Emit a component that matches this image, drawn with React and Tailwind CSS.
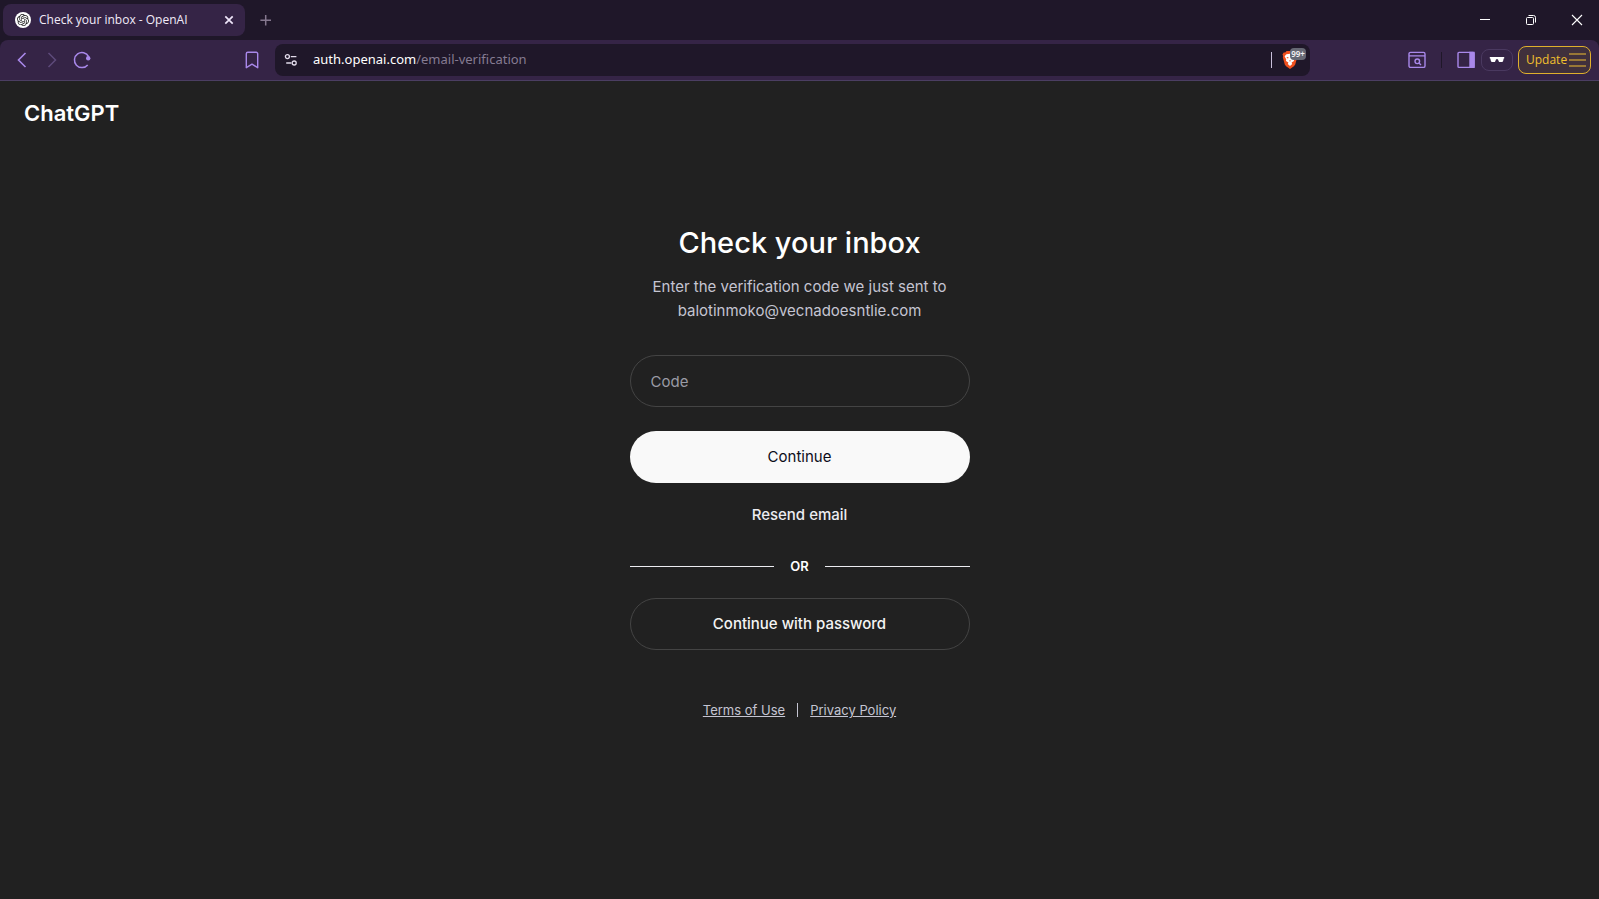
import React, { useState } from "react";
import { SiOpenai } from "react-icons/si";

const TabStrip = () => (
  <header className="h-10 w-full bg-[#1f1729] flex items-center pl-[3px] text-white">
    {/* Active tab */}
    <div className="w-[242px] h-8 rounded-lg bg-[#352446] flex items-center pl-3 pr-2">
      <span className="w-4 h-4 rounded-full bg-white flex items-center justify-center shrink-0">
        <SiOpenai className="w-3 h-3 text-[#222]" />
      </span>
      <span className="ml-2 flex-1 font-['Open_Sans',sans-serif] text-xs whitespace-nowrap text-[#f1ebf8]">
        Check your inbox - OpenAI
      </span>
      <button aria-label="Close tab" className="w-4 h-4 flex items-center justify-center">
        <svg viewBox="0 0 16 16" className="w-4 h-4" fill="none" stroke="#efe6fa" strokeWidth="1.7">
          <path d="M4.3 4.3l7.4 7.4M11.7 4.3l-7.4 7.4" />
        </svg>
      </button>
    </div>
    <button aria-label="New tab" className="ml-3 w-4 h-4">
      <svg viewBox="0 0 16 16" className="w-4 h-4" fill="none" stroke="#85788f" strokeWidth="1.5">
        <path d="M8.700 3v10.600M3.400 8.300h10.600" />
      </svg>
    </button>

    {/* Window controls */}
    <div className="ml-auto flex items-center">
      <button aria-label="Minimize" className="w-[46px] h-10 flex items-center justify-center">
        <svg viewBox="0 0 12 12" className="w-3 h-3" fill="none" stroke="#fff">
          <path d="M1 5.5h10" />
        </svg>
      </button>
      <button aria-label="Restore" className="w-[46px] h-10 flex items-center justify-center">
        <svg viewBox="0 0 12 12" className="w-3 h-3" fill="none" stroke="#fff">
          <rect x="1.5" y="3.5" width="7" height="7" rx="1" />
          <path d="M3.5 1.5h5a2 2 0 0 1 2 2v5" />
        </svg>
      </button>
      <button aria-label="Close" className="w-[45px] h-10 flex items-center justify-center">
        <svg viewBox="0 0 12 12" className="w-3 h-3" fill="none" stroke="#fff" strokeWidth="1.1">
          <path d="M1 1l10 10M11 1L1 11" />
        </svg>
      </button>
    </div>
  </header>
);

const ShieldBadge = () => (
  <button aria-label="Brave Shields" className="relative w-4 h-5">
    <svg viewBox="0 0 16 20" className="w-4 h-5">
      <path d="M4.6 1h6.8l1.4 1.6 1.5-.2 1.2 2.1-.6 1.4.3 1.3-2 7.2-1.3 1.8L8 19l-3.900-2.800-1.300-1.800-2-7.200.3-1.300-.6-1.400 1.200-2.100 1.500.2z" fill="#f0501e" />
      <path d="M4.400 4.200L8 3.700l3.600.5 1.800 2-1.600 3 .2 1.700-2.400 1.500.6 1.700L8 16l-2.200-1.900.6-1.700L4 10.900l.2-1.700-1.600-3z" fill="#fff" />
      <path d="M4.300 6.900l2.300.4-.6 1.500zM11.700 6.900l-2.300.4.6 1.500zM7.200 10.200h1.600L8 12z" fill="#f0501e" />
    </svg>
    <span className="absolute left-2 -top-0.5 w-4 h-3 rounded bg-[#666874] text-[#f3f3f5] text-[8px] leading-3 font-semibold text-center">
      99+
    </span>
  </button>
);

const Toolbar = () => (
  <div className="bg-[#1f1729]">
    <nav className="h-[41px] w-full bg-[#352446] border-b border-[#4b3e62] rounded-t-lg flex items-center pl-3.5 pr-2">
      <button aria-label="Back" className="w-4 h-5">
        <svg viewBox="0 0 16 20" className="w-4 h-5" fill="none" stroke="#a988ea" strokeWidth="1.6">
          <path d="M11.5 3L4.5 10l7 7" />
        </svg>
      </button>
      <button aria-label="Forward" className="ml-3.5 w-4 h-5">
        <svg viewBox="0 0 16 20" className="w-4 h-5" fill="none" stroke="#5e4a7a" strokeWidth="1.5">
          <path d="M4.5 3l7 7-7 7" />
        </svg>
      </button>
      <button aria-label="Reload" className="ml-3 w-5 h-5">
        <svg viewBox="0 0 20 20" className="w-5 h-5" fill="none" stroke="#a988ea" strokeWidth="1.5">
          <path d="M15.7 14.9A7.500 7.500 0 1 1 16.6 6.600" />
          <circle cx="16.2" cy="8.2" r="2.2" fill="#a988ea" stroke="none" />
        </svg>
      </button>
      <button aria-label="Bookmark this page" className="ml-[150px] w-5 h-5">
        <svg viewBox="0 0 20 20" className="w-5 h-5" fill="none" stroke="#a988ea" strokeWidth="1.4" strokeLinejoin="round">
          <path d="M4.3 3.7a1.5 1.5 0 0 1 1.5-1.5h8.4a1.5 1.5 0 0 1 1.5 1.5v14L10 14.2l-5.7 3.5z" />
        </svg>
      </button>

      {/* Address bar */}
      <div className="ml-[13px] mr-[98px] flex-1 h-8 rounded-lg bg-[#1f1729] flex items-center pl-2 pr-3">
        <svg viewBox="0 0 16 16" className="w-4 h-4 shrink-0" fill="none" stroke="#e2dbea" strokeWidth="1.3">
          <circle cx="4.4" cy="4.6" r="2" />
          <path d="M7.8 4.6h5.6M3.2 11h5.2" />
          <circle cx="11.2" cy="11" r="2" />
        </svg>
        <a href="#address" className="ml-3.5 flex-1 text-[13px] text-[#857b92] whitespace-nowrap">
          <span className="text-white">auth.openai.com</span>/email-verification
        </a>
        <span className="w-px h-4 mr-2.5 bg-[#c9bfdb]" />
        <ShieldBadge />
      </div>

      <button aria-label="Search tabs" className="w-[18px] h-[18px]">
        <svg viewBox="0 0 18 18" className="w-[18px] h-[18px]" fill="none" stroke="#a988ea" strokeWidth="1.4">
          <rect x="1" y="1.4" width="16" height="15" rx="1.5" />
          <path d="M1 4.900h16M11 12l2 2" />
          <circle cx="9.300" cy="10.300" r="2.300" />
        </svg>
      </button>
      <span className="w-px h-4 mx-[15px] bg-[#1f1729]" />
      <button aria-label="Sidebar" className="w-[18px] h-[18px]">
        <svg viewBox="0 0 18 18" className="w-[18px] h-[18px]" fill="none" stroke="#a988ea" strokeWidth="1.4">
          <rect x="1" y="1.4" width="16" height="15" rx="1" />
          <path d="M13 1.400h4v15h-4z" fill="#a988ea" />
        </svg>
      </button>
      <button aria-label="Private profile" className="ml-1.5 w-8 h-[22px] rounded-lg border border-[#4a3960] flex items-center justify-center">
        <svg viewBox="0 0 16 8" className="w-4 h-2" fill="#fff">
          <path d="M.8 1h14.400v1.500h-.5l-.6 2.600q-.2 1-1.200 1h-2q-.9 0-1.200-.9L8.900 3.200H7.100L6.300 5.200q-.3.9-1.200.9h-2q-1 0-1.200-1L1.300 2.500H.8z" />
        </svg>
      </button>
      <button className="ml-[5px] w-[73px] h-7 rounded-lg border border-[#e0b02c] bg-[#40303c] flex items-center justify-between pl-[7px] pr-1 font-['Open_Sans',sans-serif] text-xs text-[#f2c02e]">
        Update
        <svg viewBox="0 0 17 14" className="w-[17px] h-3.5" fill="none" stroke="#b58e35" strokeWidth="1.4">
          <path d="M0 1h17M0 7h17M0 13h17" />
        </svg>
      </button>
    </nav>
  </div>
);

const VerifyForm = () => {
  const [code, setCode] = useState("");

  return (
    <form onSubmit={(e) => e.preventDefault()} className="w-[340px] mt-8 flex flex-col items-center">
      <input
        aria-label="Code"
        placeholder="Code"
        value={code}
        onChange={(e) => setCode(e.target.value)}
        className="w-full h-[52px] rounded-full border border-[#444] bg-transparent px-5 text-[15px] text-white placeholder:text-[#9a9ba5] outline-none"
      />
      <button type="submit" className="mt-6 w-full h-[52px] rounded-full bg-[#f9f9f9] text-[15px] text-[#0d0d1a]">
        Continue
      </button>
      <button type="button" className="mt-5 h-6 text-[15px] font-medium text-[#ececf1]">
        Resend email
      </button>
      <div className="mt-[27px] w-full flex items-center gap-4">
        <span className="flex-1 h-px bg-[#ececf1]" />
        <span className="text-[13px] leading-6 font-semibold text-white">OR</span>
        <span className="flex-1 h-px bg-[#ececf1]" />
      </div>
      <button type="button" className="mt-5 w-full h-[52px] rounded-full border border-[#444] text-[15px] font-medium text-[#f4f4f4]">
        Continue with password
      </button>
    </form>
  );
};

const App = () => (
  <div className="min-h-screen flex flex-col bg-[#212121] font-['Noto_Sans',sans-serif]">
    <TabStrip />
    <Toolbar />

    <div className="flex-1 font-[Inter,sans-serif]">
      <div className="pl-6 pt-4 text-[22px] leading-8 font-semibold text-white">ChatGPT</div>
      <main className="pt-[94px] pb-12 flex flex-col items-center">
        <h1 className="text-[29px] leading-10 font-medium text-white">Check your inbox</h1>
        <p className="mt-3 text-[15px] leading-6 text-center text-[#c5c5d2]">
          Enter the verification code we just sent to
          <br />
          balotinmoko@vecnadoesntlie.com
        </p>
        <VerifyForm />
        <footer className="mt-12 flex items-center gap-3 text-[13px] leading-6 text-[#c5c5d2]">
          <a href="#terms" className="underline">Terms of Use</a>
          <span className="w-px h-3.5 bg-[#c5c5d2]" />
          <a href="#privacy" className="underline">Privacy Policy</a>
        </footer>
      </main>
    </div>
  </div>
);

export default App;
